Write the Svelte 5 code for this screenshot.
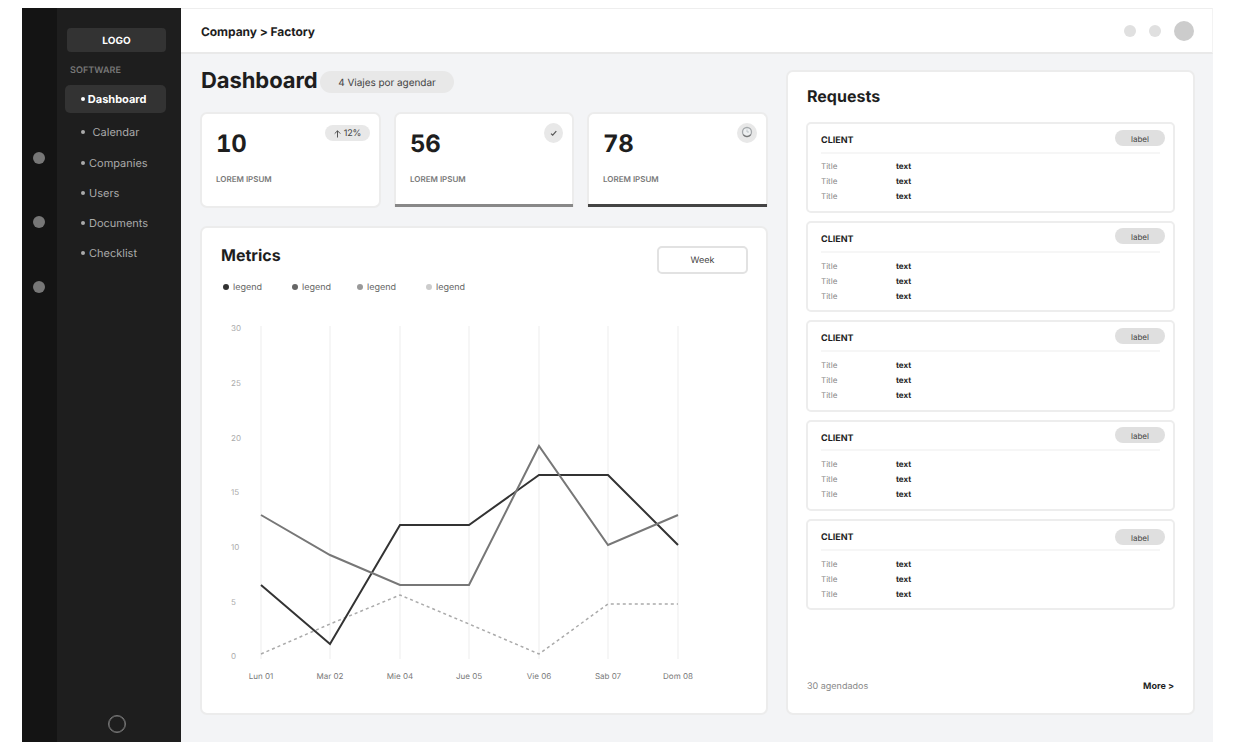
<script>
  const menu = [
    { name: 'Calendar', pad: 3.5, h: 30 },
    { name: 'Companies', pad: 0, h: 31 },
    { name: 'Users', pad: 0, h: 30 },
    { name: 'Documents', pad: 0, h: 30 },
    { name: 'Checklist', pad: 0, h: 30 }
  ];
  const legends = [
    { color: '#333333', w: 69 },
    { color: '#666666', w: 65 },
    { color: '#999999', w: 69 },
    { color: '#cccccc', w: 60 }
  ];
  const days = ['Lun 01', 'Mar 02', 'Mie 04', 'Jue 05', 'Vie 06', 'Sab 07', 'Dom 08'];
  const xs = [61, 130, 200, 269, 339, 408, 478];
  const ticks = [
    [30, 31], [25, 86], [20, 141], [15, 195], [10, 250], [5, 305], [0, 359]
  ];
  const points = (ys) => ys.map((y, i) => `${xs[i]},${y}`).join(' ');
  const dark = points([288, 347, 228, 228, 178, 178, 248]);
  const mid = points([218, 258, 288, 288, 149, 248, 218]);
  const light = points([357, 327, 298, 327, 357, 307, 307]);
  const requests = [
    { h: 91, gap: 0, pill: 6, rule: 28, rows: 5 },
    { h: 91, gap: 8, pill: 5, rule: 28, rows: 6 },
    { h: 92, gap: 8, pill: 6, rule: 28, rows: 6 },
    { h: 91, gap: 8, pill: 5, rule: 27, rows: 6 },
    { h: 91, gap: 8, pill: 8, rule: 28, rows: 6 }
  ];
</script>

<div class="app">
  <div class="rail"><i></i><i></i><i></i></div>
  <aside>
    <div class="logo">LOGO</div>
    <div class="section">SOFTWARE</div>
    <div class="item active"><span class="dot"></span>Dashboard</div>
    {#each menu as m}
      <div class="item" style="height:{m.h}px"><span class="dot"></span><span style="padding-left:{m.pad}px">{m.name}</span></div>
    {/each}
    <div class="ring"></div>
  </aside>
  <div class="main">
    <header>
      <div class="crumb">Company &gt; Factory</div>
      <div class="tools"><i></i><i></i><i class="avatar"></i></div>
    </header>
    <div class="content">
      <div class="left">
        <div class="title"><h1>Dashboard</h1><span class="trips">4 Viajes por agendar</span></div>
        <div class="stats">
          <div class="card stat">
            <div><b>10</b><small>LOREM IPSUM</small></div>
            <span class="pct">
              <svg width="7" height="8" viewBox="0 0 7 8"><path d="M3.5 7.5V.8M.7 3.6L3.5.8l2.8 2.8" fill="none" stroke="#444" stroke-width=".9" /></svg>12%</span>
          </div>
          <div class="card stat bar grey">
            <div><b>56</b><small>LOREM IPSUM</small></div>
            <span class="badge"><svg width="19" height="20" viewBox="0 0 19 20"><path d="M7 10.6l1.7 1.6 3.6-4" fill="none" stroke="#555" stroke-width="1.2" /></svg></span>
          </div>
          <div class="card stat bar black">
            <div><b>78</b><small>LOREM IPSUM</small></div>
            <span class="badge wide"><svg width="20" height="20" viewBox="0 0 20 20"><circle cx="10" cy="9" r="4.5" fill="#eef0f1" stroke="#a5a9ac" stroke-width="1.3" /><path d="M6.3 11.7a4.6 4.6 0 0 0 7.4 0" fill="none" stroke="#777" stroke-width="1.2" /><path d="M10 6.5V9h2" fill="none" stroke="#b8c0c5" stroke-width=".9" /></svg></span>
          </div>
        </div>
        <div class="card metrics">
          <div class="mhead"><h2>Metrics</h2><button>Week</button></div>
          <div class="legends">
            {#each legends as l}
              <span style="width:{l.w}px"><i style="background:{l.color}"></i><em>legend</em></span>
            {/each}
          </div>
          <svg class="chart" width="564" height="400" viewBox="2 0 564 400">
            {#each xs as x, i}
              <line x1={x} x2={x} y1="29" y2="362" stroke="#f6f6f6" stroke-width="2" />
              <text {x} y="382" text-anchor="middle" font-size="8" fill="#777">{days[i]}</text>
            {/each}
            {#each ticks as t}
              <text x="31" y={t[1] + 3} font-size="8" fill="#aaa">{t[0]}</text>
            {/each}
            <polyline points={light} fill="none" stroke="#aaaaaa" stroke-width="1.5" stroke-dasharray="3 3" />
            <polyline points={dark} fill="none" stroke="#333333" stroke-width="2" />
            <polyline points={mid} fill="none" stroke="#777777" stroke-width="2" />
          </svg>
        </div>
      </div>
      <div class="card panel">
        <h2>Requests</h2>
        {#each requests as r}
          <section style="height:{r.h}px;margin-top:{r.gap}px">
            <div class="rhead" style="height:{r.rule}px">
              <strong>CLIENT</strong><span style="margin-top:{r.pill}px">label</span>
            </div>
            <hr />
            <div class="rows" style="padding-top:{r.rows}px">
              {#each [0, 1, 2] as _}
                <div><span>Title</span><b>text</b></div>
              {/each}
            </div>
          </section>
        {/each}
        <footer><span>30 agendados</span><b>More &gt;</b></footer>
      </div>
    </div>
  </div>
</div>

<style>
  :global(body) { background: #fff; overflow: hidden; }
  * { box-sizing: border-box; }
  .app { display: flex; width: 1191px; height: 734px; margin: 8px 0 0 22px; font-family: Inter, sans-serif; color: #1e1e1e; text-rendering: geometricPrecision; }
  i { display: block; border-radius: 50%; }
  em { font-style: normal; }
  h1, h2 { margin: 0; font-weight: 700; }
  .rail { width: 35px; background: #141414; display: flex; flex-direction: column; align-items: center; padding: 143.5px 1px 0 0; gap: 52.7px; }
  .rail i { width: 12px; height: 12px; background: #777; }
  aside { width: 124px; background: #1e1e1e; padding: 20px 15px 9px 8px; display: flex; flex-direction: column; }
  .logo { height: 24px; margin-left: 2px; border-radius: 4px; background: #333; color: #fff; font-size: 10px; font-weight: 700; line-height: 26px; text-align: center; }
  .section { height: 33px; padding-left: 5px; color: #777; font-size: 9px; font-weight: 600; line-height: 37px; letter-spacing: .08px; }
  .item { display: flex; align-items: center; padding-left: 16px; font-size: 11px; color: #aaa; }
  .dot { flex: none; width: 4px; height: 4px; border-radius: 50%; background: currentColor; margin-right: 4px; }
  .active { height: 28px; margin-bottom: 4px; border-radius: 5px; background: #333; color: #fff; font-weight: 700; }
  .active .dot { margin-right: 2.8px; }
  .ring { width: 18px; height: 18px; margin: auto 0 0 43px; border: 1.5px solid #777; border-radius: 50%; box-shadow: inset 0 0 0 .5px #777; }
  .main { flex: 1; background: #f3f4f6; }
  header { height: 46px; background: #fff; border-top: 1px solid #eee; border-right: 1px solid #f3f3f3; border-bottom: 2px solid #e9e9e9; padding: 0 18px 0 20px; display: flex; align-items: center; justify-content: space-between; }
  .crumb { font-size: 12px; font-weight: 700; margin-top: 1px; letter-spacing: -.06px; }
  .tools { display: flex; align-items: center; gap: 13px; }
  .tools i { width: 12px; height: 12px; background: #e0e0e0; }
  .tools .avatar { width: 20px; height: 20px; background: #ccc; }
  .content { display: flex; justify-content: space-between; padding: 16px 18px 0 19px; }
  .left { width: 568px; }
  .title { display: flex; height: 42px; padding-left: 1px; align-items: flex-start; }
  .title h1 { width: 119px; font-size: 22px; line-height: 22px; letter-spacing: -.08px; white-space: nowrap; }
  .trips { width: 134px; height: 22px; margin-top: 1px; border-radius: 11px; background: #e8e8e8; color: #444; font-size: 10px; line-height: 24px; letter-spacing: -.04px; text-align: center; }
  .card { background: #fff; border: 2px solid #ececec; border-radius: 7px; }
  .stats { display: flex; gap: 13px; height: 96px; }
  .stat { width: 181px; display: flex; justify-content: space-between; padding: 10px 9px 0 14px; }
  .stat:nth-child(2) { width: 180px; }
  .stat b { display: block; font-size: 24px; line-height: 40px; font-variant-numeric: tabular-nums; letter-spacing: -.3px; }
  .stat small { display: block; margin-top: 9px; color: #777; font-size: 8px; font-weight: 600; line-height: 12px; }
  .pct { width: 45px; height: 16px; margin-top: 1px; padding-top: 1px; border-radius: 8px; background: #e8e8e8; display: flex; align-items: center; justify-content: center; gap: 3px; font-size: 9px; line-height: 19px; letter-spacing: -.15px; color: #444; }
  .bar { position: relative; border-bottom: 0; border-radius: 7px 7px 0 0; height: 95px; }
  .bar::after { content: ''; position: absolute; left: -1px; right: -1px; bottom: 0; height: 3px; background: #888; }
  .black::after { background: #444; }
  .badge { width: 19px; height: 20px; margin-top: -1px; border-radius: 50%; background: #e8e8e8; }
  .wide { width: 20px; }
  .badge svg { display: block; }
  .metrics { height: 489px; margin-top: 18px; overflow: hidden; }
  .mhead { display: flex; justify-content: space-between; height: 50px; padding: 18px 18px 0 19px; }
  .mhead h2 { margin-top: -1px; }
  h2 { font-size: 16px; line-height: 20px; }
  button { width: 91px; height: 28px; border: 2px solid #e2e2e2; border-radius: 5px; background: #fff; padding: 1px 0 0; font: 9px Inter, sans-serif; color: #444; text-rendering: geometricPrecision; }
  .legends { display: flex; height: 17px; margin-bottom: 2px; padding-left: 21px; font-size: 9px; color: #666; }
  .legends span { display: flex; align-items: center; gap: 4px; }
  .legends i { width: 6px; height: 6px; }
  .legends em { padding-top: 2px; }
  .chart { display: block; font-family: Inter, sans-serif; }
  .panel { width: 409px; height: 645px; padding: 15px 18px 0; display: flex; flex-direction: column; }
  .panel h2 { height: 35px; padding-left: 1px; line-height: 19px; }
  section { border: 2px solid #ededed; border-radius: 5px; padding: 0 13px; flex: none; }
  .rhead { display: flex; justify-content: space-between; margin-right: -5px; }
  .rhead strong { font-size: 9px; line-height: 33px; }
  .rhead span { width: 50px; height: 16px; border-radius: 8px; background: #dfdfdf; font-size: 8px; line-height: 18px; text-align: center; color: #444; }
  hr { height: 2px; margin: 0; border: 0; background: #f6f6f6; }
  .rows div { display: flex; height: 15px; font-size: 8px; line-height: 15px; }
  .rows span { width: 75px; color: #888; }
  footer { display: flex; justify-content: space-between; margin: auto 1px 17px; font-size: 9px; line-height: 19px; color: #888; }
  footer b { color: #1e1e1e; }
</style>
